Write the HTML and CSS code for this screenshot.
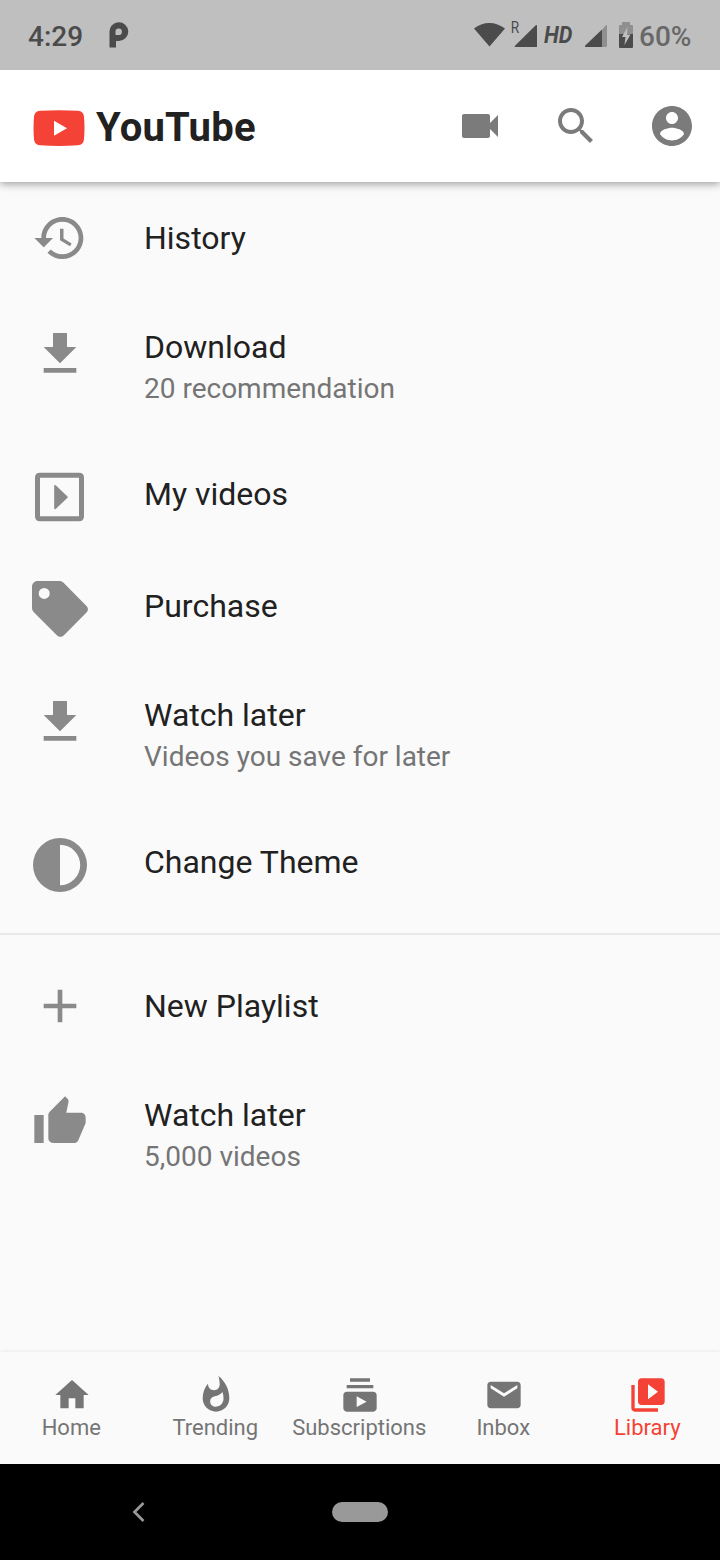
FILE: index.html
```html
<!DOCTYPE html>
<html lang="en">
<head>
<meta charset="utf-8">
<title>YouTube</title>
<link rel="stylesheet" href="styles.css">
</head>
<body>
<div class="phone">
  <header class="status">
    <span class="clock">4:29</span>
    <svg class="status-p" width="22" height="26" viewBox="0 0 22 26"><path fill-rule="evenodd" d="M1.500 25.500V10.500a9.400 9.400 0 1 1 9.400 8.500H8v6.500zM7.500 13h3a3.200 3.200 0 1 0-3-3.200z"/></svg>
    <svg class="status-net" width="63" height="30" viewBox="0 0 63 30"><path d="M0 8.500C8.500 1 22 1 31 8.500L15.500 26.500zM41 25.800L61.500 5.500q1.500-1 1.500.5V27H42q-2 0-1-1.200z"/></svg>
    <span class="roam"><span>R</span></span>
    <span class="hd">HD</span>
    <svg class="status-signal" width="22" height="24" viewBox="0 0 22 24"><path d="M17 23V6L20.500 1.500Q22 .5 22 2v20q0 1-1 1z" fill="#8f8f8f"/><path d="M0 21.800L17 5.500V23H1q-1.500 0-1-1.200z"/></svg>
    <svg class="status-battery" width="14" height="26" viewBox="0 0 14 26"><path d="M0 12V4q0-1 1-1h2V0h8v3h2q1 0 1 1v8z" fill="#8f8f8f"/><path d="M0 12h14v13q0 1-1 1H1q-1 0-1-1z"/><path d="M8.500 5L3 15h3.500L5.500 23 11.500 12.500H8z" fill="#bfbfbf"/></svg>
    <span class="percent">60%</span>
  </header>

  <div class="appbar">
    <svg class="logo" width="52" height="37" viewBox="0 0 52 37"><path fill="#f44336" d="M7 .8Q26-.5 45 .8q5.500.3 6 6 1 11 0 22.500-.5 5.500-6 6Q26 36.800 7 35.300q-5.500-.5-6-6-1-11 0-22.500Q1.500 1.100 7 .8z"/><path fill="#fff" d="M21 10.800v15l13-7.500z"/></svg>
    <span class="brand">YouTube</span>
    <div class="actions">
      <svg width="48" height="48" viewBox="0 0 24 24"><path d="M17 10.500V7c0-.55-.45-1-1-1H4c-.55 0-1 .45-1 1v10c0 .55.45 1 1 1h12c.55 0 1-.45 1-1v-3.500l4 4v-11l-4 4z"/></svg>
      <svg width="48" height="48" viewBox="0 0 24 24"><path d="M15.500 14h-.79l-.28-.27C15.410 12.590 16 11.110 16 9.500 16 5.910 13.090 3 9.500 3S3 5.910 3 9.500 5.910 16 9.500 16c1.610 0 3.090-.59 4.230-1.570l.27.28v.79l5 4.990L20.490 19l-4.990-5zm-6 0C7.010 14 5 11.990 5 9.500S7.010 5 9.500 5 14 7.010 14 9.500 11.990 14 9.500 14z"/></svg>
      <svg width="48" height="48" viewBox="0 0 24 24"><path d="M12 2C6.480 2 2 6.480 2 12s4.480 10 10 10 10-4.480 10-10S17.520 2 12 2zm0 3c1.660 0 3 1.340 3 3s-1.340 3-3 3-3-1.340-3-3 1.340-3 3-3zm0 14.200c-2.500 0-4.710-1.280-6-3.220.03-1.990 4-3.080 6-3.080 1.990 0 5.970 1.090 6 3.080-1.290 1.940-3.500 3.220-6 3.220z"/></svg>
    </div>
  </div>

  <main class="list">
    <div class="tile">
      <svg class="tile-icon" viewBox="0 0 24 24"><path d="M13 3c-4.970 0-9 4.030-9 9H1l3.890 3.890.07.14L9 12H6c0-3.870 3.130-7 7-7s7 3.130 7 7-3.130 7-7 7c-1.930 0-3.680-.79-4.940-2.060l-1.420 1.420C8.270 19.990 10.510 21 13 21c4.970 0 9-4.030 9-9s-4.030-9-9-9zm-1 5v5l4.280 2.540.72-1.210-3.500-2.080V8H12z"/></svg>
      <div class="title">History</div>
    </div>
    <div class="tile two-line">
      <svg class="tile-icon" viewBox="0 0 24 24"><path d="M19 9h-4V3H9v6H5l7 7 7-7zM5 18v2h14v-2H5z"/></svg>
      <div><div class="title">Download</div><div class="subtitle">20 recommendation</div></div>
    </div>
    <div class="tile low-icon">
      <svg class="tile-icon" viewBox="0 0 56 56"><path fill-rule="evenodd" d="M8 3.700h39q5 0 5 5v38.500q0 5-5 5H8q-5 0-5-5V8.700q0-5 5-5zm0 5v38.500h39V8.700z"/><path d="M22.200 17q0-1.700 1.500-.8L35.500 27.400q.7.700 0 1.400L23.700 39.900q-1.500.9-1.500-.8z"/></svg>
      <div class="title">My videos</div>
    </div>
    <div class="tile low-icon">
      <svg class="tile-icon" viewBox="0 0 56 56"><path fill-rule="evenodd" d="M5.500 0H27.500c1.500 0 2.800.6 3.800 1.600L54.500 25c1.900 1.900 1.900 4.700 0 6.600L31.700 54.400c-1.900 1.900-4.700 1.900-6.600 0L1.600 30.900C.6 29.900 0 28.600 0 27.100V5.500C0 2.500 2.500 0 5.500 0zM12.200 6.900a5.500 5.500 0 1 0 0 11 5.500 5.500 0 0 0 0-11z"/></svg>
      <div class="title">Purchase</div>
    </div>
    <div class="tile two-line">
      <svg class="tile-icon" viewBox="0 0 24 24"><path d="M19 9h-4V3H9v6H5l7 7 7-7zM5 18v2h14v-2H5z"/></svg>
      <div><div class="title">Watch later</div><div class="subtitle">Videos you save for later</div></div>
    </div>
    <div class="tile low-icon">
      <svg class="tile-icon" viewBox="0 0 56 56"><path fill-rule="evenodd" d="M28 1a27 27 0 1 0 0 54 27 27 0 0 0 0-54zm0 6.800a20.200 20.200 0 0 1 0 40.400z"/></svg>
      <div class="title">Change Theme</div>
    </div>
    <div class="divider"></div>
    <div class="tile">
      <svg class="tile-icon" viewBox="0 0 24 24"><path d="M19 13h-6v6h-2v-6H5v-2h6V5h2v6h6v2z"/></svg>
      <div class="title">New Playlist</div>
    </div>
    <div class="tile two-line">
      <svg class="tile-icon" viewBox="0 0 24 24"><path d="M1 21h4V9H1v12zm22-11c0-1.100-.9-2-2-2h-6.310l.95-4.570.03-.32c0-.41-.17-.79-.44-1.060L14.170 1 7.590 7.590C7.220 7.950 7 8.450 7 9v10c0 1.100.9 2 2 2h9c.83 0 1.540-.5 1.840-1.220l3.020-7.050c.09-.23.14-.47.14-.73v-2z"/></svg>
      <div><div class="title">Watch later</div><div class="subtitle">5,000 videos</div></div>
    </div>
  </main>

  <nav class="tabs">
    <div class="tab"><svg viewBox="0 0 24 24"><path d="M10 20v-6h4v6h5v-8h3L12 3 2 12h3v8z"/></svg><span>Home</span></div>
    <div class="tab"><svg viewBox="0 0 24 24"><path d="M13.500.67s.74 2.650.74 4.800c0 2.060-1.350 3.730-3.410 3.730-2.070 0-3.630-1.670-3.630-3.730l.03-.36C5.210 7.510 4 10.620 4 14c0 4.420 3.580 8 8 8s8-3.580 8-8C20 8.610 17.410 3.800 13.500.67zM11.710 19c-1.780 0-3.220-1.400-3.220-3.140 0-1.620 1.050-2.760 2.810-3.120 1.770-.36 3.600-1.210 4.620-2.580.39 1.290.59 2.650.59 4.040 0 2.650-2.150 4.800-4.800 4.800z"/></svg><span>Trending</span></div>
    <div class="tab"><svg viewBox="0 0 24 24"><path d="M20 8H4V6h16v2zm-2-6H6v2h12V2zm4 10v8c0 1.100-.9 2-2 2H4c-1.100 0-2-.9-2-2v-8c0-1.100.9-2 2-2h16c1.100 0 2 .9 2 2zm-6 4l-6-3.270v6.530L16 16z"/></svg><span>Subscriptions</span></div>
    <div class="tab"><svg viewBox="0 0 24 24"><path d="M20 4H4c-1.100 0-1.990.9-1.990 2L2 18c0 1.100.9 2 2 2h16c1.100 0 2-.9 2-2V6c0-1.100-.9-2-2-2zm0 4l-8 5-8-5V6l8 5 8-5v2z"/></svg><span>Inbox</span></div>
    <div class="tab active"><svg viewBox="0 0 24 24"><path d="M4 6H2v14c0 1.100.9 2 2 2h14v-2H4V6zm16-4H8c-1.100 0-2 .9-2 2v12c0 1.100.9 2 2 2h12c1.100 0 2-.9 2-2V4c0-1.100-.9-2-2-2zm-8 12.500v-9l6 4.500-6 4.500z"/></svg><span>Library</span></div>
  </nav>

  <footer class="system">
    <svg width="14" height="22" viewBox="0 0 14 22"><path d="M11.500 2L2.500 11l9 9" fill="none" stroke="#999" stroke-width="2.700"/></svg>
    <div class="pill"></div>
  </footer>
</div>
</body>
</html>
```

FILE: styles.css
```css
* { box-sizing: border-box; }
body { margin: 0; font-family: Roboto, sans-serif; }
svg { display: block; flex: none; }
.phone { width: 720px; height: 1560px; display: flex; flex-direction: column; background: #fafafa; overflow: hidden; }

.status { height: 70px; flex: none; display: flex; align-items: flex-start; padding: 0 28px; background: #bfbfbf; color: #4b4b4b; fill: #4b4b4b; white-space: nowrap; position: relative; z-index: 1; }
.clock { width: 80px; font-size: 28px; font-weight: 500; line-height: 33px; padding-top: 20px; }
.status-p { margin-top: 22px; }
.status-net { margin: 20px 0 0 344px; }
.roam { width: 0; margin-top: 20px; font-size: 16px; line-height: 16px; }
.roam span { display: block; width: 10px; margin-left: -27px; transform: scaleX(.85); }
.hd { width: 48px; margin-top: 21px; padding-left: 7px; font-size: 24px; line-height: 28px; font-weight: 700; font-style: italic; letter-spacing: 0; transform: scaleX(.9); transform-origin: 7px 0; }
.status-signal { margin-top: 24px; }
.status-battery { margin: 22px 0 0 12px; }
.percent { margin: 20px 0 0 6px; font-size: 28px; line-height: 33px; font-weight: 500; color: #686868; }

.appbar { height: 112px; flex: none; display: flex; align-items: center; padding: 0 24px 0 33px; background: #fff; box-shadow: 0 2px 8px rgba(0,0,0,.38); position: relative; }
.logo { margin-top: 4px; }
.brand { margin-left: 11px; font-size: 40px; line-height: 47px; font-weight: 700; letter-spacing: .2px; color: #212121; padding-top: 2px; }
.actions { display: flex; gap: 48px; margin-left: auto; fill: #7b7b7b; }

.list { flex: 1; }
.tile { height: 112px; display: flex; align-items: flex-start; padding: 28px 32px 0; }
.tile-icon { width: 56px; height: 56px; margin-right: 56px; fill: #8a8a8a; }
.tile.low-icon .tile-icon { margin-top: 3px; }
.two-line { height: 144px; padding-top: 32px; }
.title { font-size: 32px; line-height: 56px; color: #212121; }
.two-line .title { line-height: 42px; }
.subtitle { font-size: 28px; line-height: 42px; color: #757575; }
.divider { height: 2px; margin: 15px 0; background: #e9e9e9; }

.tabs { height: 112px; flex: none; display: grid; grid-template-columns: repeat(5, 144px); box-shadow: 0 0 4px rgba(0,0,0,.09); background: #fafafa; }
.tab { display: flex; flex-direction: column; align-items: center; padding-top: 23px; font-size: 22px; line-height: 26px; color: #757575; fill: #757575; }
.tab svg { width: 40px; height: 40px; }
.tab span { margin-right: 1.5px; }
.tab.active { color: #f44336; fill: #f44336; }

.system { height: 96px; flex: none; background: #000; display: grid; grid-template-columns: 132px 200px 56px; grid-template-rows: 96px; align-items: center; }
.system svg { grid-column: 2; }
.pill { height: 20px; border-radius: 10px; background: #999; grid-column: 3; }
```
